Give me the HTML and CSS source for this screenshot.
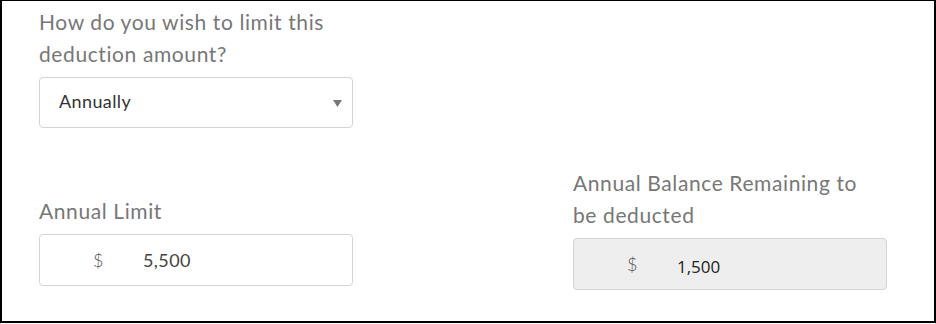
FILE: index.html
```html
<!DOCTYPE html>
<html lang="en">
<head>
    <meta charset="UTF-8">
    <meta name="viewport" content="width=device-width, initial-scale=1.0">
    <title>Deduction Limit</title>
    <link rel="stylesheet" href="styles.css">
</head>
<body>
    <div class="frame">
        <!-- Limit type -->
        <div class="field field-top">
            <label class="label" for="limitType">How do you wish to limit this deduction amount?</label>
            <div class="select-box">
                <span class="select-value">Annually</span>
                <svg class="caret" width="9" height="7" viewBox="0 0 9 7"><polygon points="0,0 9,0 4.5,7" fill="#777"/></svg>
            </div>
        </div>
        <!-- Amount row -->
        <div class="row">
            <div class="field field-left">
                <label class="label">Annual Limit</label>
                <div class="money-box">
                    <span class="currency">$</span>
                    <span class="amount">5,500</span>
                </div>
            </div>
            <div class="field">
                <label class="label">Annual Balance Remaining to be deducted</label>
                <div class="money-box readonly">
                    <span class="currency">$</span>
                    <span class="amount amount-ro">1,500</span>
                </div>
            </div>
        </div>
    </div>
</body>
</html>
```

FILE: styles.css
```css
/* Base styles */
body {
    margin: 0;
    background: #fff;
    font-family: Lato, "Open Sans", Arial, sans-serif;
}

.frame {
    box-sizing: border-box;
    width: 936px;
    height: 323px;
    border: 2px solid #000;
    border-top-width: 1px;
    padding: 5px 0 0 37px;
}

.field {
    width: 314px;
    display: flex;
    flex-direction: column;
}

.label {
    display: block;
    width: 300px;
    font-size: 21px;
    letter-spacing: 0.6px;
    line-height: 32px;
    color: #777;
    margin-bottom: 7px;
}

.select-box,
.money-box {
    box-sizing: border-box;
    height: 51px;
    border: 1px solid #d4d4d4;
    border-radius: 4px;
    display: flex;
    align-items: center;
}

.select-box {
    padding: 0 10px 3px 19px;
    justify-content: space-between;
}

.select-value {
    font-size: 18px;
    letter-spacing: 0.4px;
    color: #333;
}

.caret {
    margin-top: 4px;
}

.row {
    display: flex;
    align-items: flex-end;
    gap: 220px;
    margin-top: 39px;
}

.field-left {
    margin-bottom: 4px;
}

.money-box {
    height: 52px;
    padding-left: 53px;
}

.readonly {
    background: #eee;
}

.currency {
    font-size: 18px;
    color: #555;
    width: 50px;
    font-weight: 300;
}

.amount {
    font-size: 18px;
    letter-spacing: 0.4px;
    color: #444;
}

.amount-ro {
    font-family: "Open Sans", Arial, sans-serif;
    font-size: 17px;
    letter-spacing: 0;
    color: #222;
    margin-top: 4px;
}
```
